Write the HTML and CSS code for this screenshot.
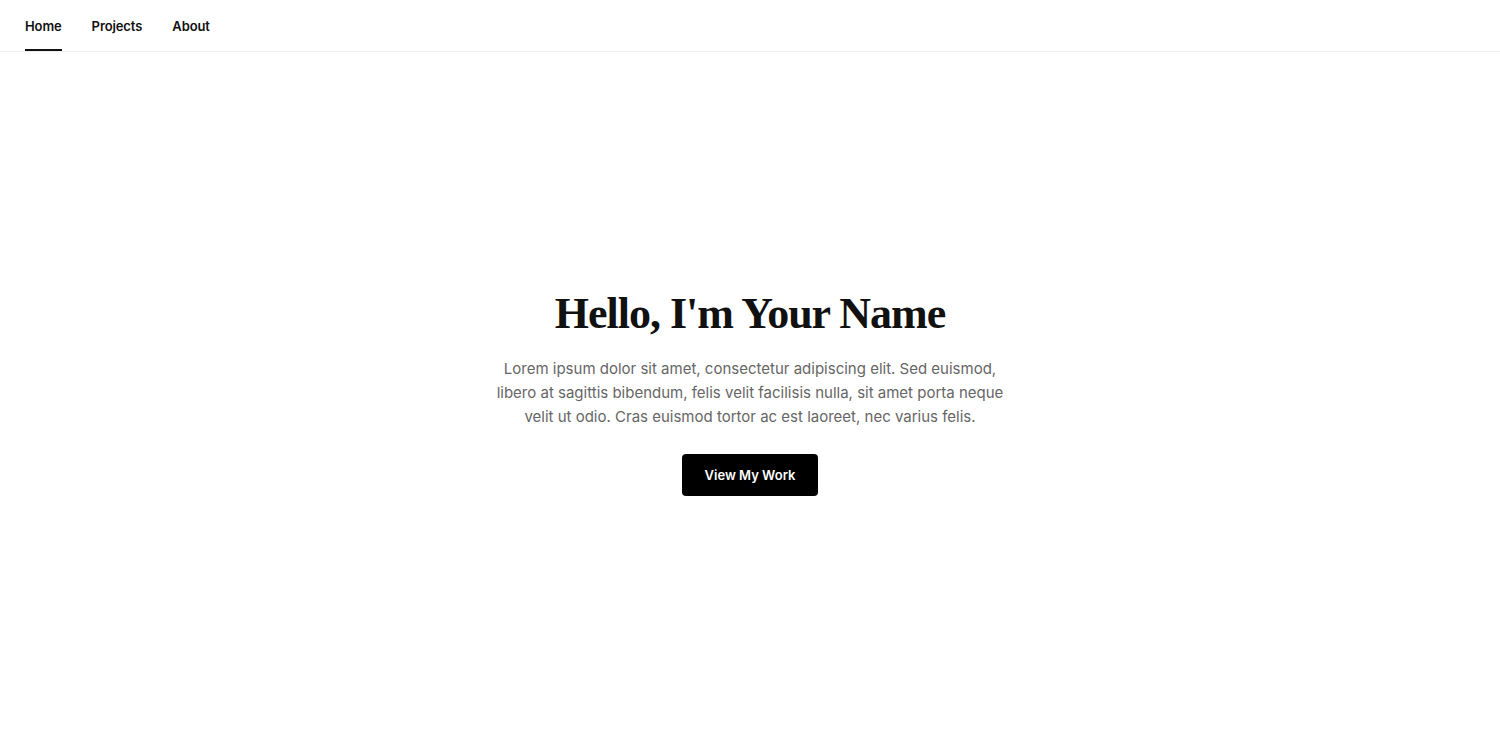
FILE: index.html
```html
<!DOCTYPE html>
<html>
  <head>
    <meta name="viewport" content="width=device-width, initial-scale=1" />
    <link rel="stylesheet" href="styles.css">
  </head>
  <body>
    <nav class="nav">
      <a href="#home" class="nav-link active">Home</a>
      <a href="#projects" class="nav-link">Projects</a>
      <a href="#about" class="nav-link">About</a>
    </nav>

    <section id="home" class="hero">
      <div class="hero-inner">
        <h1>Hello, I'm Your Name</h1>
        <p>
          Lorem ipsum dolor sit amet, consectetur adipiscing elit. Sed euismod,
          libero at sagittis bibendum, felis velit facilisis nulla, sit amet porta neque
          velit ut odio. Cras euismod tortor ac est laoreet, nec varius felis.
        </p>
        <a href="#projects" class="btn">View My Work</a>
      </div>
    </section>

    <section id="projects" class="section"></section>
    <section id="about" class="section"></section>
  </body>
</html>
```

FILE: styles.css
```css
* {
  box-sizing: border-box;
}
body {
  margin: 0;
  font-family: Inter, "Noto Sans", Arial, sans-serif;
  color: #111;
  background-color: #fff;
}

.nav {
  display: flex;
  column-gap: 30px;
  height: 52px;
  padding: 0 25px;
  border-bottom: 1px solid #eeeeee;
}
.nav-link {
  display: flex;
  align-items: center;
  font-size: 13px;
  font-weight: 600;
  letter-spacing: -0.1px;
  color: #111;
  text-decoration: none;
  border-bottom: 2px solid transparent;
  padding-top: 2px;
}
.nav-link.active {
  border-bottom-color: #111;
}

.hero {
  display: flex;
  align-items: center;
  justify-content: center;
  height: calc(100vh - 52px);
  text-align: center;
}
.hero-inner {
  display: flex;
  flex-direction: column;
  align-items: center;
  margin-bottom: 21px;
}
.hero h1 {
  margin: 0 0 17px;
  font-family: "Liberation Serif", "Times New Roman", serif;
  font-size: 44px;
  font-weight: 700;
  letter-spacing: -1px;
  line-height: 53px;
  color: #111;
}
.hero p {
  max-width: 520px;
  margin: 0 0 25px;
  font-size: 15px;
  line-height: 24px;
  color: #666;
}
.btn {
  display: inline-block;
  padding: 12px 23px;
  font-size: 13px;
  font-weight: 600;
  line-height: 18px;
  color: #fff;
  background-color: #000;
  border-radius: 4px;
  text-decoration: none;
}

.section {
  min-height: 900px;
}
```
